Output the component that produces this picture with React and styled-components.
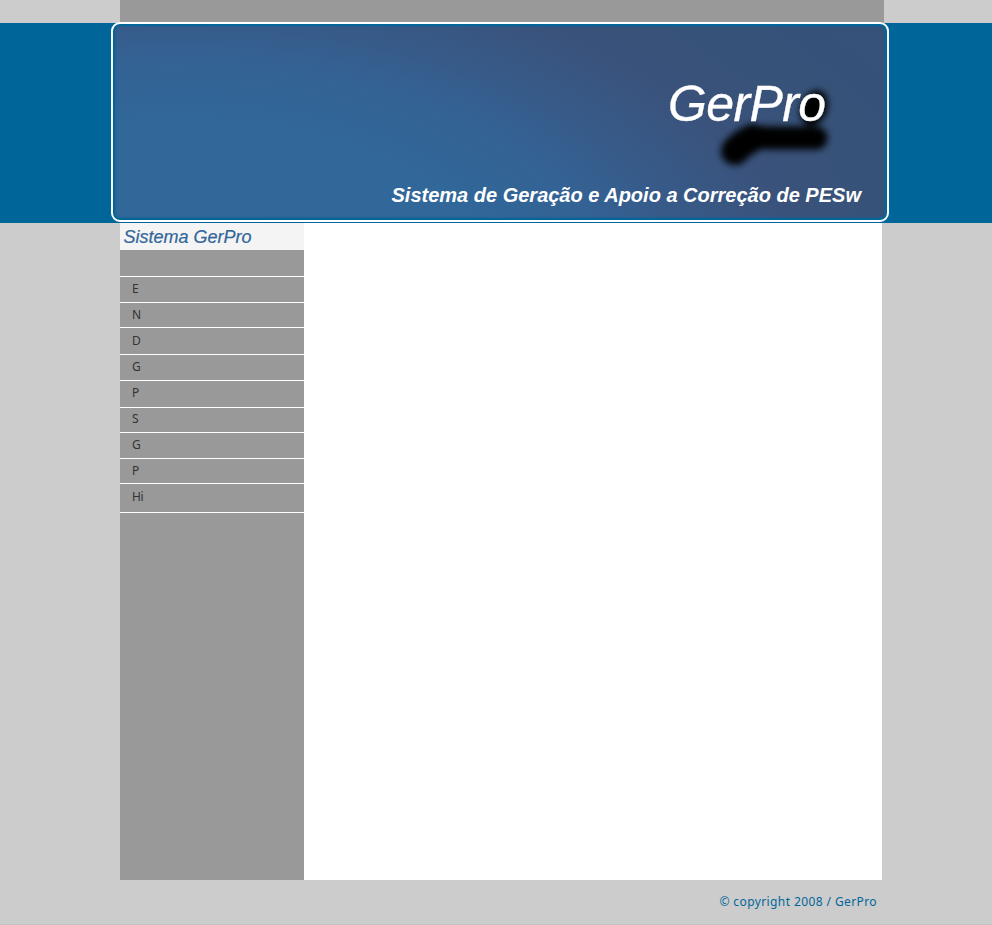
import React from "react";
import styled, { createGlobalStyle } from "styled-components";

const GlobalStyle = createGlobalStyle`
  * { box-sizing: border-box; }
  body { margin: 0; background: #ccc; font-family: "Liberation Sans", Arial, sans-serif; }
`;

const Page = styled.div`
  height: 925px;
  overflow: hidden;
  background: #ccc;
  border-bottom: 1px solid #c2c2c2;
`;

const TopStrip = styled.div`
  width: 764px;
  height: 23px;
  margin-left: 120px;
  background: #999;
`;

const Band = styled.header`
  height: 200px;
  padding-left: 111px;
  background: #006699;
`;

const Frame = styled.div`
  position: relative;
  top: -1px;
  width: 778px;
  height: 200px;
  padding: 2px;
  border: 2px solid #fff;
  border-radius: 9px;
  background: #006699;
`;

const Banner = styled.div`
  position: relative;
  height: 192px;
  border-radius: 5px;
  overflow: hidden;
  box-shadow: inset 0 0 3px #1d5f90;
  background: radial-gradient(
    ellipse 530px 275px at 60px 260px,
    #316899 0%, #316799 60%, #346294 82%, #375a88 98%, #3a527b 118%, #375278 134%, #36517a 160%
  );
`;

const Brush = styled.svg`
  position: absolute;
  inset: 0;
`;

const Title = styled.h1`
  position: absolute;
  left: 553px;
  top: 50px;
  margin: 0;
  color: #fff;
  font-size: 50px;
  line-height: 56px;
  letter-spacing: -0.6px;
  font-style: italic;
  font-weight: 400;
  -webkit-text-stroke: 0.3px #fff;
`;

const Tagline = styled.p`
  position: absolute;
  left: 276.5px;
  top: 157px;
  margin: 0;
  color: #fff;
  font-size: 20px;
  line-height: 24px;
  font-style: italic;
  font-weight: 700;
  white-space: nowrap;
`;

const Content = styled.div`
  display: flex;
  width: 762px;
  height: 657px;
  margin-left: 120px;
  background: #fff;
`;

const Sidebar = styled.nav`
  width: 184px;
  background: #999;
`;

const SidebarTitle = styled.h2`
  height: 27px;
  margin: 0;
  padding-left: 3.5px;
  background: #f4f4f4;
  color: #336699;
  font-size: 18px;
  line-height: 28px;
  font-style: italic;
  font-weight: 400;
  -webkit-text-stroke: 0.2px #336699;
`;

const MenuItem = styled.div`
  height: ${(p) => p.$height}px;
  padding: ${(p) => p.$top}px 0 0 12px;
  border-bottom: 1px solid #fff;
  color: #333;
  font: 12px/14px "Noto Sans", sans-serif;
  letter-spacing: -0.3px;
`;

const Copyright = styled.footer`
  width: 762px;
  margin-left: 120px;
  padding: 13px 5px 0 0;
  text-align: right;
  color: #006699;
  font: 12px/17px "Noto Sans", sans-serif;
  letter-spacing: 0.4px;
`;

const items = [
  ["", 27, 5], ["E", 26, 5], ["N", 25, 5], ["D", 27, 6], ["G", 26, 5],
  ["P", 27, 5], ["S", 25, 4], ["G", 26, 5], ["P", 25, 5], ["Hi", 29, 6],
];

export default function App() {
  return (
    <Page>
      <GlobalStyle />
      <TopStrip />
      <Band>
        <Frame>
          <Banner>
            <Brush width="770" height="192" aria-hidden="true">
              <defs>
                <filter id="soft" x="-30%" y="-50%" width="160%" height="200%">
                  <feGaussianBlur stdDeviation="3.8" />
                </filter>
              </defs>
              <g filter="url(#soft)">
                <path d="M620 126 Q628 112 640 111 Q648 112 660 112 H701" fill="none" stroke="#000" strokeWidth="23" strokeLinecap="round" strokeLinejoin="round" />
                <path d="M620 125 Q627 117 638 112" fill="none" stroke="#000" strokeWidth="28" strokeLinecap="round" />
                <ellipse cx="699" cy="82" rx="13" ry="18" transform="rotate(22 699 82)" />
              </g>
            </Brush>
            <Title>GerPro</Title>
            <Tagline>Sistema de Geração e Apoio a Correção de PESw</Tagline>
          </Banner>
        </Frame>
      </Band>
      <Content>
        <Sidebar>
          <SidebarTitle>Sistema GerPro</SidebarTitle>
          {items.map(([label, height, top], i) => (
            <MenuItem key={i} $height={height} $top={top}>{label}</MenuItem>
          ))}
        </Sidebar>
      </Content>
      <Copyright>© copyright 2008 / GerPro</Copyright>
    </Page>
  );
}
